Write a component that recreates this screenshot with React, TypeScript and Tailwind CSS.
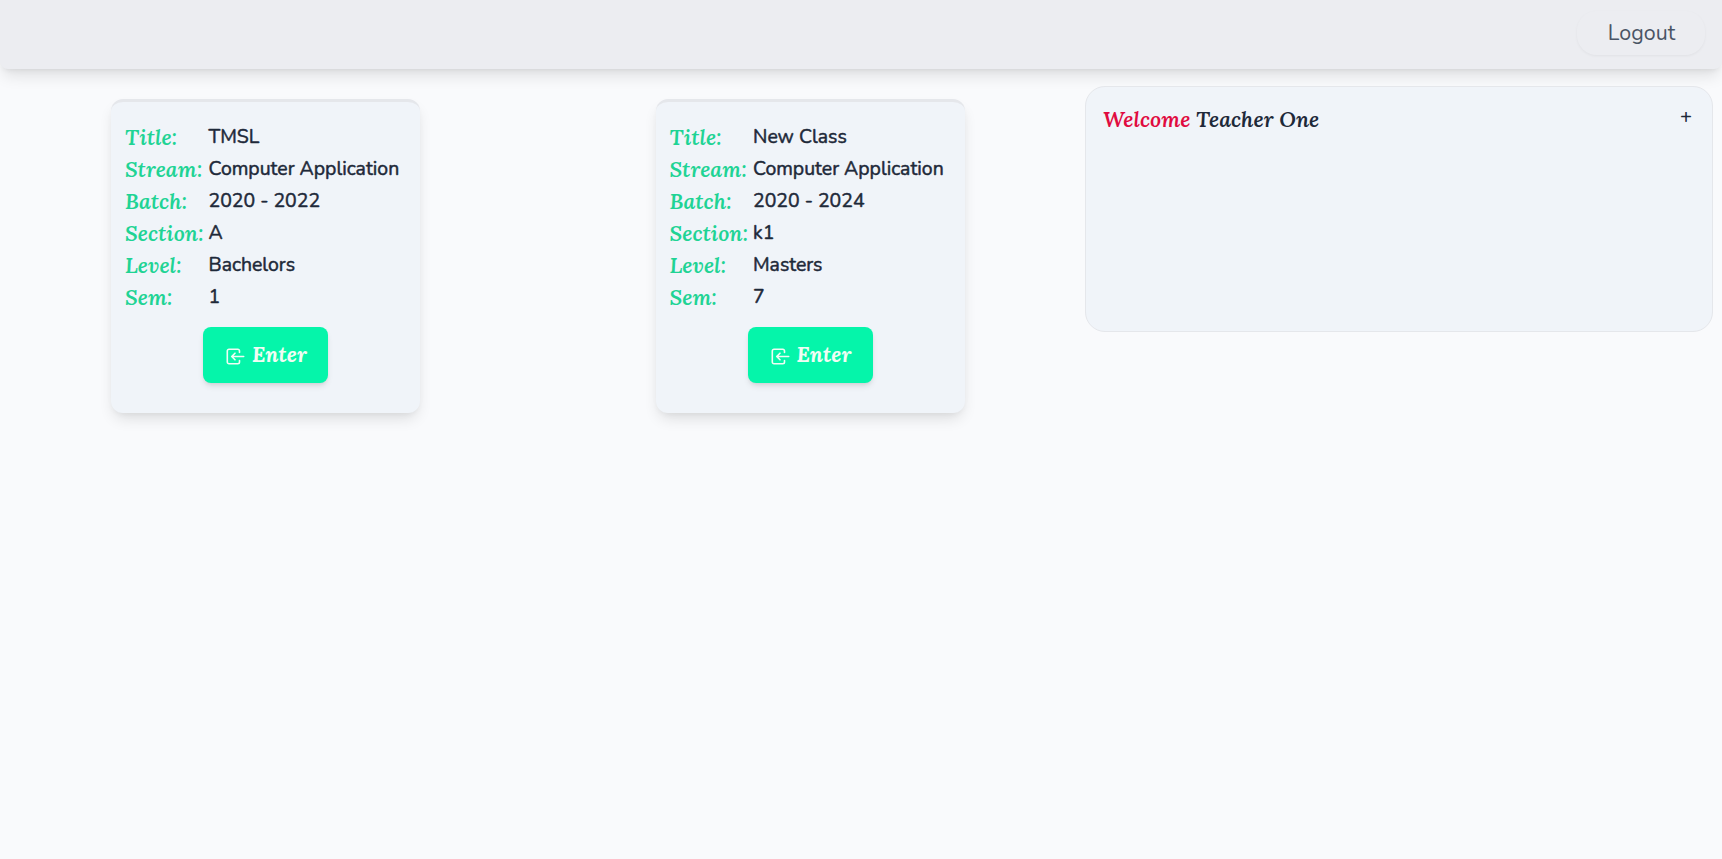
import React from "react";

const serif = "font-['Lora','Liberation_Serif',serif]";
const sans = "font-['Nunito','Lato',sans-serif]";

type Field = { label: string; value: string };

const classes: Field[][] = [
  [
    { label: "Title:", value: "TMSL" },
    { label: "Stream:", value: "Computer Application" },
    { label: "Batch:", value: "2020 - 2022" },
    { label: "Section:", value: "A" },
    { label: "Level:", value: "Bachelors" },
    { label: "Sem:", value: "1" },
  ],
  [
    { label: "Title:", value: "New Class" },
    { label: "Stream:", value: "Computer Application" },
    { label: "Batch:", value: "2020 - 2024" },
    { label: "Section:", value: "k1" },
    { label: "Level:", value: "Masters" },
    { label: "Sem:", value: "7" },
  ],
];

function EnterIcon() {
  return (
    <svg className="mt-1 h-5 w-5" viewBox="0 0 20 20" fill="none" stroke="currentColor" strokeWidth="1.6" strokeLinecap="round" strokeLinejoin="round">
      <path d="M14.5 5.5V4a1.7 1.7 0 0 0-1.7-1.7H4A1.7 1.7 0 0 0 2.3 4v11A1.7 1.7 0 0 0 4 16.7h8.8a1.7 1.7 0 0 0 1.7-1.7v-1.5" />
      <path d="M18.7 9.5H7M10 6.2L6.7 9.5l3.3 3.3" />
    </svg>
  );
}

function ClassCard({ fields }: { fields: Field[] }) {
  return (
    <div className="h-[314px] w-[309px] rounded-xl border-t-[3px] border-gray-200 bg-[#f0f4f9] px-[14px] pt-[19px] shadow-[0_8px_15px_-3px_rgb(0_0_0/0.12),0_3px_6px_-2px_rgb(0_0_0/0.05)]">
      <div>
        {fields.map((f) => (
          <div key={f.label} className="flex h-8 items-center">
            <span className={`${serif} w-[83.5px] shrink-0 text-[21.6px] font-semibold italic leading-8 text-[#20d394]`}>{f.label}</span>
            <span className="whitespace-nowrap text-[19.44px] leading-8 text-gray-800 [-webkit-text-stroke:0.5px_currentColor]">{f.value}</span>
          </div>
        ))}
      </div>
      <button className="mx-auto mt-[13.5px] flex h-14 w-[125px] items-center justify-center gap-[7px] rounded-lg bg-[#05f5aa] pl-px text-green-50 shadow-md">
        <EnterIcon />
        <span className={`${serif} text-[21.6px] font-bold italic`}>Enter</span>
      </button>
    </div>
  );
}

export default function App() {
  return (
    <div className={`${sans} min-h-screen bg-[#f9fafc] text-gray-800`}>
      <header className="flex h-[69px] items-start justify-end rounded-b-lg bg-[#ecedf1] pr-[17px] pt-[11px] shadow-lg">
        <button className="h-11 w-32 rounded-[20px] pl-px text-[21.4px] leading-[42px] text-gray-600 shadow-[0_1px_3px_0_rgb(0_0_0/0.05)]">Logout</button>
      </header>
      <main className="flex">
        <section className="grid w-[1085px] grid-cols-[544.5px_540px] pl-[111px] pt-[30px]">
          {classes.map((fields) => (
            <ClassCard key={fields[0].value} fields={fields} />
          ))}
        </section>
        <aside className="mt-[17px] flex h-[246px] w-[628px] items-start justify-between rounded-[20px] border border-gray-200 bg-[#f0f4f9] pl-[17px] pr-5 pt-4">
          <h1 className={`${serif} text-[21.6px] font-semibold italic leading-8`}>
            <span className="text-[#e00b40]">Welcome</span> Teacher One
          </h1>
          <button className="text-[20px] font-semibold leading-7">+</button>
        </aside>
      </main>
    </div>
  );
}
